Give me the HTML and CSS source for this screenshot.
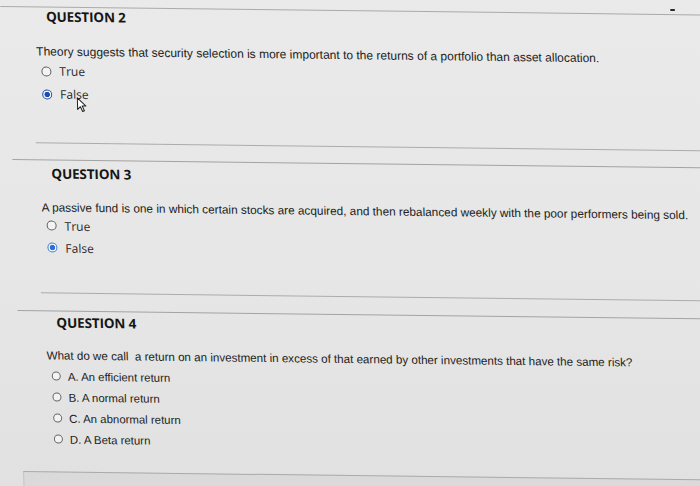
FILE: index.html
```html
<!DOCTYPE html>
<html lang="en">
<head>
<meta charset="utf-8">
<title>Quiz</title>
<link rel="stylesheet" href="styles.css">
</head>
<body>
<div class="page">
  <div class="topline"><span class="speck"></span></div>

  <section class="question q2">
    <h2 class="q-title">QUESTION 2</h2>
    <p class="q-text">Theory suggests that security selection is more important to the returns of a portfolio than asset allocation.</p>
    <ul class="options tf">
      <li class="option"><span class="radio"></span><span class="label">True</span></li>
      <li class="option"><span class="radio checked"></span><span class="label">False</span>
        <svg class="cursor" width="11" height="16" viewBox="0 0 11 16"><path d="M1 1 L1 12.5 L3.8 9.8 L5.9 14.6 L7.7 13.8 L5.6 9.1 L9.4 9.1 Z" fill="#fff" stroke="#222" stroke-width="1" stroke-linejoin="round"/></svg>
      </li>
    </ul>
    <hr class="sep-short">
    <hr class="sep-long">
  </section>

  <section class="question q3">
    <h2 class="q-title">QUESTION 3</h2>
    <p class="q-text">A passive fund is one in which certain stocks are acquired, and then rebalanced weekly with the poor performers being sold.</p>
    <ul class="options tf">
      <li class="option"><span class="radio"></span><span class="label">True</span></li>
      <li class="option"><span class="radio checked light"></span><span class="label">False</span></li>
    </ul>
    <hr class="sep-short">
    <hr class="sep-long">
  </section>

  <section class="question q4">
    <h2 class="q-title">QUESTION 4</h2>
    <p class="q-text">What do we call&nbsp; a return on an investment in excess of that earned by other investments that have the same risk?</p>
    <ul class="options mc">
      <li class="option"><span class="radio"></span><span class="label">A. An efficient return</span></li>
      <li class="option"><span class="radio"></span><span class="label">B. A normal return</span></li>
      <li class="option"><span class="radio"></span><span class="label">C. An abnormal return</span></li>
      <li class="option"><span class="radio"></span><span class="label">D. A Beta return</span></li>
    </ul>
    <div class="next-box"></div>
  </section>
</div>
</body>
</html>
```

FILE: styles.css
```css
html, body {
  margin: 0;
  padding: 0;
  height: 100%;
  overflow: hidden;
}

body {
  background: linear-gradient(180deg, #e9eae9 0%, #e5e6e5 60%, #e0e1e0 100%);
  color: #1c1c1c;
  font-family: "Liberation Sans", Arial, sans-serif;
}

.page {
  position: relative;
  width: 700px;
  height: 486px;
  overflow: hidden;
  transform-origin: 0 0;
  transform: matrix(1, 0.012, 0.034, 1, 0, 0);
}

.topline {
  position: relative;
  height: 6px;
  border-bottom: 1px solid #a9aaa9;
}

.speck {
  position: absolute;
  left: 670px;
  top: 1px;
  width: 5px;
  height: 2px;
  border-radius: 1px;
  background: #2a2a2a;
}

.question {
  padding-left: 6.5px;
}

.q-title {
  margin: 0 0 0 39px;
  height: 18px;
  font-family: "Open Sans", "Liberation Sans", sans-serif;
  font-weight: 700;
  font-size: 13.5px;
  line-height: 18px;
  color: #151515;
  letter-spacing: -0.15px;
}

.q-text {
  margin: 19px 0 0 28px;
  font-size: 12px;
  line-height: 14px;
  white-space: nowrap;
  color: #222;
}

.options {
  list-style: none;
  margin: 0;
  padding: 0 0 0 32.5px;
}

.option {
  position: relative;
  display: flex;
  align-items: center;
  height: 22px;
}

.tf .label {
  font-family: "Open Sans", "Liberation Sans", sans-serif;
  font-size: 12px;
  color: #2a2a2a;
  margin-left: 8px;
}

.radio {
  box-sizing: border-box;
  width: 10px;
  height: 10px;
  border: 1px solid #5c5d5c;
  border-radius: 50%;
  background: #f3f3f3;
  flex: none;
}

.radio.checked {
  border: 1.5px solid #1b4fa6;
  background: radial-gradient(circle, #1a4ea8 0 2.4px, #f4f6fa 3px);
}

.radio.checked.light {
  border-color: #3d7fd3;
  background: radial-gradient(circle, #2f6fd0 0 2.4px, #eef3fa 3px);
}

.cursor {
  position: absolute;
  left: 34px;
  top: 13px;
}

.sep-short {
  border: 0;
  border-top: 1px solid #abacab;
  margin: 37px 0 0 24.5px;
  height: 0;
}

.sep-long {
  border: 0;
  border-top: 1px solid #a2a3a2;
  margin: 16.5px 0 0 0;
  height: 0;
}

/* per-question vertical rhythm */
.q2 .options { margin-top: 1.6px; }
.q2 .option + .option { margin-top: 1px; }

.q3 .q-title { margin-top: 4px; }
.q3 .q-text { margin-top: 18.4px; font-size: 11.8px; }
.q3 .sep-short { margin-top: 34px; }

.q4 .q-title { margin-top: 2.4px; }
.q4 .q-text { margin-top: 16.6px; font-size: 11.6px; }
.q4 .options { margin-top: 3.5px; }

.mc .option { height: 21px; }
.mc .radio {
  width: 9px;
  height: 9px;
  border-color: #666766;
}
.mc .label {
  font-size: 11.4px;
  margin-left: 7px;
  color: #222;
}

.next-box {
  margin-top: 21.5px;
  margin-left: 0.5px;
  height: 30px;
  background: #d9dad9;
  border-top: 1px solid #a9aaa9;
  border-left: 1px solid #c4c5c4;
}
```
